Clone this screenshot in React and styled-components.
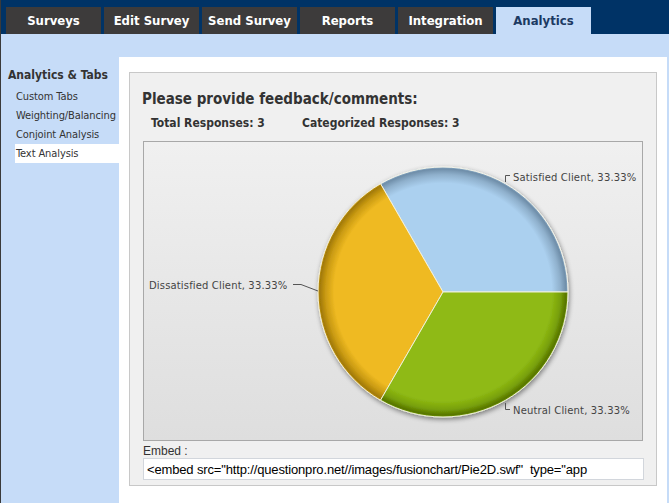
import React from "react";
import styled, { createGlobalStyle } from "styled-components";

const Global = createGlobalStyle`
  html, body { margin: 0; padding: 0; }
  body { background: #c6dcf8; font-family: "DejaVu Sans Condensed", "DejaVu Sans", sans-serif; }
  * { box-sizing: border-box; }
`;

const Page = styled.div`
  width: 669px;
  height: 503px;
  background: #c6dcf8;
  border-left: 1px solid #3a3a3a;
  overflow: hidden;
  display: flex;
  flex-direction: column;
`;

const TopBar = styled.div`
  height: 34px;
  background: #003366;
  display: flex;
  align-items: flex-end;
  gap: 3px;
  padding-left: 5px;
  flex-shrink: 0;
`;

const Tab = styled.div`
  width: 95px;
  height: 27px;
  display: flex;
  align-items: center;
  justify-content: center;
  font-family: "DejaVu Sans Condensed", "DejaVu Sans", sans-serif;
  font-stretch: condensed;
  font-weight: bold;
  font-size: 13px;
  color: ${(p) => (p.$active ? "#1c3a63" : "#ffffff")};
  background: ${(p) => (p.$active ? "#c6dcf8" : "#3d3b3b")};
`;

const Body = styled.div`
  flex: 1;
  display: flex;
  padding-top: 23px;
`;

const Sidebar = styled.div`
  width: 118px;
  flex-shrink: 0;
  padding-top: 11px;
  font-family: "DejaVu Sans Condensed", "DejaVu Sans", sans-serif;
  font-stretch: condensed;
`;

const SideHeading = styled.div`
  font-weight: bold;
  font-size: 12px;
  color: #333;
  padding-left: 7px;
  height: 15px;
  line-height: 15px;
  margin-bottom: 4px;
`;

const SideItem = styled.div`
  margin-left: 14px;
  padding-left: 1px;
  height: 19px;
  line-height: 19px;
  font-size: 11px;
  letter-spacing: -0.1px;
  color: #333;
  white-space: nowrap;
  background: ${(p) => (p.$active ? "#ffffff" : "transparent")};
`;

const Main = styled.div`
  flex: 1;
  background: #ffffff;
  margin-right: 4px;
  padding: 15px 10px 0 10px;
`;

const Panel = styled.div`
  background: #f0f0f0;
  border: 1px solid #c8c8c8;
  padding: 0 12px 5px 13px;
`;

const Title = styled.div`
  font-family: "DejaVu Sans Condensed", "DejaVu Sans", sans-serif;
  font-stretch: condensed;
  font-weight: bold;
  font-size: 15px;
  color: #333;
  margin-top: 17px;
  margin-left: -1px;
  height: 19px;
  line-height: 19px;
`;

const Stats = styled.div`
  display: flex;
  height: 18px;
  align-items: center;
  margin-top: 5px;
  padding-left: 8px;
  font-family: "DejaVu Sans Condensed", "DejaVu Sans", sans-serif;
  font-stretch: condensed;
  font-weight: bold;
  font-size: 12px;
  color: #333;
`;

const Stat = styled.span`
  width: ${(p) => p.$w || "auto"};
`;

const ChartBox = styled.div`
  margin-top: 9px;
  width: 500px;
  height: 300px;
  border: 1px solid #a8a8a8;
  background: linear-gradient(#f0f0f0, #dedede);
`;

const EmbedLabel = styled.div`
  font-family: "Liberation Sans", Arial, sans-serif;
  font-size: 12px;
  color: #333;
  height: 17px;
  padding-top: 4px;
  line-height: 13px;
`;

const EmbedInput = styled.input`
  display: block;
  width: 501px;
  height: 22px;
  border: 1px solid #d2d6dc;
  background: #fff;
  padding: 0 3px;
  font-family: "Liberation Sans", Arial, sans-serif;
  font-size: 13px;
  letter-spacing: -0.15px;
  color: #000;
  outline: none;
`;

const cx = 299;
const cy = 150;
const r = 125;
const pt = (deg) => [cx + r * Math.cos((deg * Math.PI) / 180), cy - r * Math.sin((deg * Math.PI) / 180)];

function slice(a0, a1) {
  const [x0, y0] = pt(a0);
  const [x1, y1] = pt(a1);
  return `M${cx},${cy} L${x0.toFixed(2)},${y0.toFixed(2)} A${r},${r} 0 0 0 ${x1.toFixed(2)},${y1.toFixed(2)} Z`;
}

const Grad = ({ id, base, mid, dark }) => (
  <radialGradient id={id} cx={cx} cy={cy} r={r} gradientUnits="userSpaceOnUse">
    <stop offset="0" stopColor={base} />
    <stop offset="0.87" stopColor={base} />
    <stop offset="0.94" stopColor={mid} />
    <stop offset="0.985" stopColor={dark} />
    <stop offset="1" stopColor={mid} />
  </radialGradient>
);

const PieChart = () => (
  <svg width="498" height="298" viewBox="0 0 498 298">
    <defs>
      <Grad id="gBlue" base="#abd0ef" mid="#8fb0cc" dark="#6f8ea9" />
      <Grad id="gYellow" base="#efba22" mid="#c99a12" dark="#a27a06" />
      <Grad id="gGreen" base="#8fba14" mid="#78a00a" dark="#577500" />
      <filter id="shadow" x="-20%" y="-20%" width="140%" height="140%">
        <feGaussianBlur in="SourceAlpha" stdDeviation="2.5" />
        <feOffset dx="1" dy="2" result="b" />
        <feComponentTransfer>
          <feFuncA type="linear" slope="0.45" />
        </feComponentTransfer>
        <feMerge>
          <feMergeNode />
          <feMergeNode in="SourceGraphic" />
        </feMerge>
      </filter>
    </defs>
    <g filter="url(#shadow)">
      <path d={slice(0, 120)} fill="url(#gBlue)" stroke="#f4f4e8" strokeWidth="1" />
      <path d={slice(120, 240)} fill="url(#gYellow)" stroke="#f4f0d8" strokeWidth="1" />
      <path d={slice(240, 360)} fill="url(#gGreen)" stroke="#eef0d8" strokeWidth="1" />
    </g>
    <g fill="none" stroke="#555" strokeWidth="1">
      <path d="M366,33.5 L361.5,33.5 L361.5,40" />
      <path d="M149,142.5 L157,142.5 L174,149" />
      <path d="M361.5,261 L361.5,267.5 L366,267.5" />
    </g>
    <g fontFamily='"DejaVu Sans", Verdana, sans-serif' fontSize="10" letterSpacing="0.15" fill="#444">
      <text x="369" y="38.5">Satisfied Client, 33.33%</text>
      <text x="5" y="146.5">Dissatisfied Client, 33.33%</text>
      <text x="369" y="271.5">Neutral Client, 33.33%</text>
    </g>
  </svg>
);

const tabs = ["Surveys", "Edit Survey", "Send Survey", "Reports", "Integration", "Analytics"];
const side = ["Custom Tabs", "Weighting/Balancing", "Conjoint Analysis", "Text Analysis"];

export default function App() {
  return (
    <>
      <Global />
      <Page>
        <TopBar>
          {tabs.map((t) => (
            <Tab key={t} $active={t === "Analytics"}>{t}</Tab>
          ))}
        </TopBar>
        <Body>
          <Sidebar>
            <SideHeading>Analytics &amp; Tabs</SideHeading>
            {side.map((s) => (
              <SideItem key={s} $active={s === "Text Analysis"}>{s}</SideItem>
            ))}
          </Sidebar>
          <Main>
            <Panel>
              <Title>Please provide feedback/comments:</Title>
              <Stats>
                <Stat $w="151px">Total Responses: 3</Stat>
                <Stat>Categorized Responses: 3</Stat>
              </Stats>
              <ChartBox>
                <PieChart />
              </ChartBox>
              <EmbedLabel>Embed :</EmbedLabel>
              <EmbedInput
                readOnly
                value={'<embed src="http://questionpro.net//images/fusionchart/Pie2D.swf"  type="app'}
              />
            </Panel>
          </Main>
        </Body>
      </Page>
    </>
  );
}
